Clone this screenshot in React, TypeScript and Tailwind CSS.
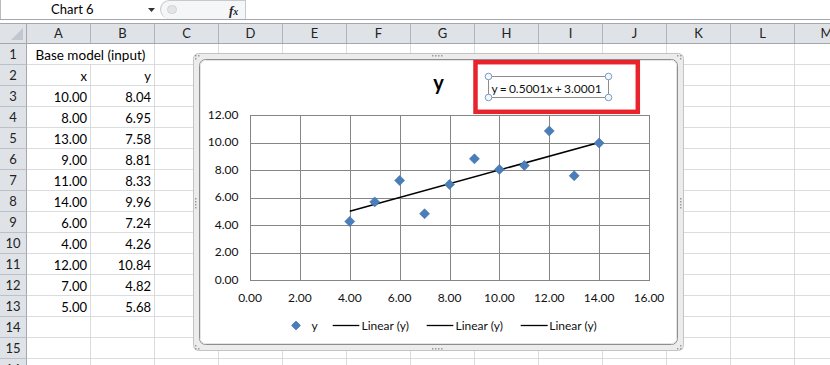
import React from "react";

const COLS = ["A", "B", "C", "D", "E", "F", "G", "H", "I", "J", "K", "L", "M"];

const DATA: [string, string][] = [
  ["x", "y"],
  ["10.00", "8.04"],
  ["8.00", "6.95"],
  ["13.00", "7.58"],
  ["9.00", "8.81"],
  ["11.00", "8.33"],
  ["14.00", "9.96"],
  ["6.00", "7.24"],
  ["4.00", "4.26"],
  ["12.00", "10.84"],
  ["7.00", "4.82"],
  ["5.00", "5.68"],
];

const POINTS: [number, number][] = [
  [10, 8.04],
  [8, 6.95],
  [13, 7.58],
  [9, 8.81],
  [11, 8.33],
  [14, 9.96],
  [6, 7.24],
  [4, 4.26],
  [12, 10.84],
  [7, 4.82],
  [5, 5.68],
];

const PX = (v: number) => 250 + v * 24.9375;
const PY = (v: number) => 280 - v * 13.75;

function Diamond({ x, y, r }: { x: number; y: number; r: number }) {
  return (
    <path
      d={`M ${x} ${y - r} L ${x + r} ${y} L ${x} ${y + r} L ${x - r} ${y} Z`}
      fill="#4a7ebb"
      stroke="#3f6fa8"
      strokeWidth={0.6}
    />
  );
}

function Dots({ pts }: { pts: [number, number][] }) {
  return (
    <g fill="#9a9a9a">
      {pts.map(([x, y], i) => (
        <rect key={i} x={x} y={y} width={1.5} height={1.5} />
      ))}
    </g>
  );
}

function Chart() {
  const xs = Array.from({ length: 9 }, (_, i) => Math.round(250 + i * 49.875) + 0.5);
  const ys = Array.from({ length: 7 }, (_, j) => Math.round(115 + j * 27.5) + 0.5);
  const font = "Lato, sans-serif";
  return (
    <svg
      className="absolute left-[193px] top-[53px]"
      width={492}
      height={299}
      viewBox="193 53 492 299"
    >
      {/* selection frame */}
      <rect x={193.5} y={53.5} width={490} height={297} rx={5} fill="#ececec" stroke="#c4c4c4" />
      <rect x={199.5} y={59.5} width={478} height={285} rx={6} fill="#ffffff" stroke="#8e8e8e" />
      <rect x={200.5} y={60.5} width={476} height={283} rx={5} fill="none" stroke="#e4e4e4" />
      {/* handles */}
      <Dots pts={[[195, 55], [198, 55], [195, 58]]} />
      <Dots pts={[[680, 55], [677, 55], [680, 58]]} />
      <Dots pts={[[195, 348], [198, 348], [195, 345]]} />
      <Dots pts={[[680, 348], [677, 348], [680, 345]]} />
      <Dots pts={[[432, 55], [435, 55], [438, 55], [441, 55]]} />
      <Dots pts={[[432, 348], [435, 348], [438, 348], [441, 348]]} />
      <Dots pts={[[195, 198], [195, 201], [195, 204], [195, 207]]} />
      <Dots pts={[[680, 198], [680, 201], [680, 204], [680, 207]]} />

      {/* title */}
      <text x={438.5} y={90} textAnchor="middle" fontFamily={font} fontWeight={700} fontSize={20} fill="#000">
        y
      </text>

      {/* grid */}
      <g stroke="#868686" strokeWidth={1} shapeRendering="crispEdges">
        {xs.map((x, i) => (
          <line key={"v" + i} x1={x} y1={115} x2={x} y2={281} />
        ))}
        {ys.map((y, j) => (
          <line key={"h" + j} x1={250} y1={y} x2={650} y2={y} />
        ))}
      </g>

      {/* axis labels */}
      <g fontFamily={font} fontSize={12} fill="#111">
        {[12, 10, 8, 6, 4, 2, 0].map((v, j) => (
          <text key={v} x={238.5} y={115 + j * 27.5 + 3.5} textAnchor="end">
            {v.toFixed(2)}
          </text>
        ))}
        {[0, 2, 4, 6, 8, 10, 12, 14, 16].map((v, i) => (
          <text key={"x" + v} x={250 + i * 49.875} y={301.7} textAnchor="middle">
            {v.toFixed(2)}
          </text>
        ))}
      </g>

      {/* trendline */}
      <line x1={PX(4)} y1={PY(5.0005)} x2={PX(14)} y2={PY(10.0015)} stroke="#000" strokeWidth={1.5} />

      {/* points */}
      {POINTS.map(([x, y], i) => (
        <Diamond key={i} x={PX(x)} y={PY(y)} r={5} />
      ))}

      {/* legend */}
      <Diamond x={296} y={325.5} r={4.5} />
      <g fontFamily={font} fontSize={12} fill="#111">
        <text x={311.5} y={329.5}>y</text>
        <text x={361.5} y={329.5}>Linear (y)</text>
        <text x={455.5} y={329.5}>Linear (y)</text>
        <text x={549.3} y={329.5}>Linear (y)</text>
      </g>
      <g stroke="#000" strokeWidth={1.3}>
        <line x1={332.7} y1={325.5} x2={359.3} y2={325.5} />
        <line x1={426.7} y1={325.5} x2={453.3} y2={325.5} />
        <line x1={520.7} y1={325.5} x2={547.7} y2={325.5} />
      </g>

      {/* equation label */}
      <rect x={488.5} y={76.5} width={120} height={21} fill="#fff" stroke="#8c8c8c" />
      <text x={491.5} y={92.5} fontFamily={font} fontSize={12} wordSpacing={-0.8} fill="#111">
        y = 0.5001x + 3.0001
      </text>
      {[
        [488.5, 76.5],
        [608.5, 76.5],
        [488.5, 97.5],
        [608.5, 97.5],
      ].map(([cx, cy], i) => (
        <circle key={i} cx={cx} cy={cy} r={3.3} fill="#f4f8fc" stroke="#7a9cc6" strokeWidth={1} />
      ))}

      {/* red highlight */}
      <rect x={475.5} y={62.2} width={162.3} height={49.6} fill="none" stroke="#e8232c" strokeWidth={4.5} />
    </svg>
  );
}

export default function App() {
  return (
    <div className="relative w-[830px] h-[365px] overflow-hidden bg-white [font-family:Lato,sans-serif] text-[13px] text-black">
      {/* formula bar */}
      <div className="flex h-[20px] border-b border-[#a3a7ac]">
        <div className="relative w-[160px] h-full border-l border-[#b8bcc1] pl-[50px] leading-[19px]">
          Chart 6
          <svg className="absolute left-[147px] top-[8px]" width={7} height={4} viewBox="0 0 7 4">
            <path d="M0 0 L7 0 L3.5 4 Z" fill="#333" />
          </svg>
        </div>
        <div className="relative w-[86px] h-full rounded-l-[10px] border-l border-t border-r border-[#c6cacf] bg-[#f5f6f7]">
          <div className="absolute left-[6px] top-[4px] w-[10px] h-[9px] rounded-full bg-[#e2e4e7] border border-[#d0d3d7]" />
          <div className="absolute left-[68px] top-[1px] leading-[17px] [font-family:'Liberation_Serif',serif] italic font-bold text-[#222]">
            <span className="text-[13px]">f</span>
            <span className="text-[10px]">x</span>
          </div>
        </div>
        <div className="flex-1 bg-white" />
      </div>
      <div className="h-[3px] bg-white" />
      {/* column headers */}
      <div className="flex h-[21px] border-y border-[#a3a8ae] bg-[#dfe3e8]">
        <div className="relative w-[27px] shrink-0 border-r border-[#a3a8ae]">
          <svg className="absolute right-[3px] bottom-[3px]" width={12} height={12} viewBox="0 0 12 12">
            <path d="M12 0 L12 12 L0 12 Z" fill="#c2c7cd" />
          </svg>
        </div>
        {COLS.map((c) => (
          <div
            key={c}
            className="w-[64px] shrink-0 border-r border-[#b1b6bc] text-center leading-[19px] text-[#222]"
          >
            {c}
          </div>
        ))}
      </div>
      {/* rows */}
      {Array.from({ length: 16 }, (_, i) => i + 1).map((r) => (
        <div key={r} className="flex h-[21px]">
          <div className="w-[27px] shrink-0 border-r border-b border-r-[#a3a8ae] border-b-[#bcc1c7] bg-[#dfe3e8] text-center leading-[20px] text-[#222]">
            {r}
          </div>
          {r === 1 ? (
            <div className="w-[128px] shrink-0 border-r border-b border-[#dadcdd] text-center pt-[4px] leading-[15px] text-[13.5px]">
              Base model (input)
            </div>
          ) : (
            <>
              <div className="w-[64px] shrink-0 border-r border-b border-[#dadcdd] text-right pr-[3px] pt-[4px] leading-[15px]">
                {DATA[r - 2]?.[0] ?? ""}
              </div>
              <div className="w-[64px] shrink-0 border-r border-b border-[#dadcdd] text-right pr-[3px] pt-[4px] leading-[15px]">
                {DATA[r - 2]?.[1] ?? ""}
              </div>
            </>
          )}
          {COLS.slice(2).map((c) => (
            <div key={c} className="w-[64px] shrink-0 border-r border-b border-[#dadcdd]" />
          ))}
        </div>
      ))}
      <Chart />
    </div>
  );
}
